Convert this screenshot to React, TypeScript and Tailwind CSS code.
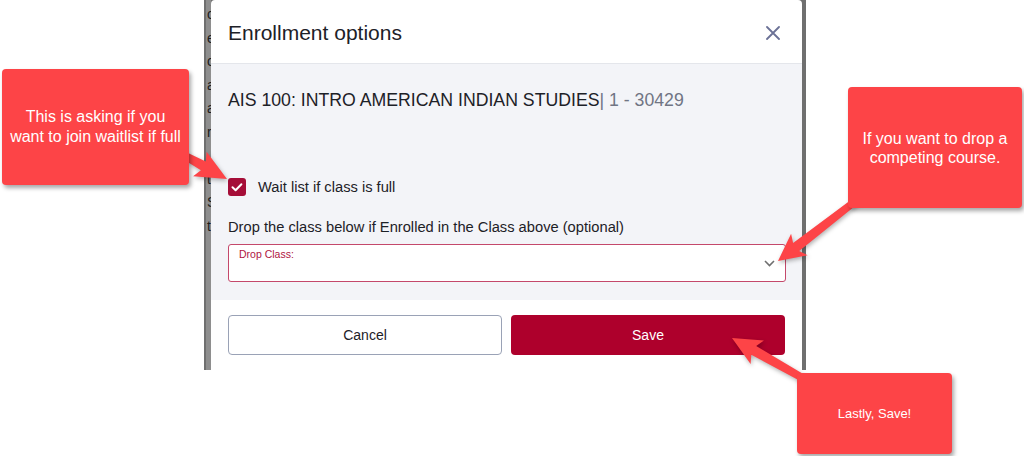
import React from "react";

type Pt = [number, number];

function arrowPoints(tail: Pt, tip: Pt, sw1: number, sw2: number, hl: number, hw: number): string {
  const dx = tip[0] - tail[0];
  const dy = tip[1] - tail[1];
  const L = Math.hypot(dx, dy);
  const ux = dx / L;
  const uy = dy / L;
  const px = -uy;
  const py = ux;
  const bx = tip[0] - ux * hl;
  const by = tip[1] - uy * hl;
  const pts: Pt[] = [
    [tail[0] + (px * sw1) / 2, tail[1] + (py * sw1) / 2],
    [bx + (px * sw2) / 2, by + (py * sw2) / 2],
    [bx - ux * 4 + (px * hw) / 2, by - uy * 4 + (py * hw) / 2],
    tip,
    [bx - ux * 4 - (px * hw) / 2, by - uy * 4 - (py * hw) / 2],
    [bx - (px * sw2) / 2, by - (py * sw2) / 2],
    [tail[0] - (px * sw1) / 2, tail[1] - (py * sw1) / 2],
  ];
  return pts.map((p) => `${p[0].toFixed(1)},${p[1].toFixed(1)}`).join(" ");
}

const RED = "#fd4447";

export default function App() {
  const letters = ["c", "e", "o", "a", "a", "r", "", "t", "S", "t", "", "", "", "", ""];
  return (
    <div className="relative w-[1024px] h-[456px] bg-white overflow-hidden font-['Liberation_Sans',Arial,sans-serif]">
      <div className="flex pl-[204px]">
        <div className="flex h-[370px] w-[602px] bg-[#6f6f6f]">
          <div className="w-[2px] shrink-0" />
          <div className="w-[5px] shrink-0 overflow-hidden bg-[#8e8e8e] pt-[3px] text-[14px] leading-[23.5px] text-[#1c1c1c]">
            {letters.map((l, i) => (
              <div key={i} className="h-[23.5px] pl-[1px]">
                {l}
              </div>
            ))}
          </div>
          <div className="flex w-[591px] shrink-0 flex-col rounded-t-[4px] bg-white">
            {/* header */}
            <div className="flex h-[64px] items-center justify-between border-b border-[#e4e6eb] pl-[17px] pr-[22px] pt-[3px]">
              <span className="text-[21px] leading-[24px] text-[#1d2127]">Enrollment options</span>
              <svg width="14" height="14" viewBox="0 0 14 14">
                <path d="M1 1 L13 13 M13 1 L1 13" stroke="#6b7196" strokeWidth="1.8" strokeLinecap="round" />
              </svg>
            </div>
            {/* body */}
            <div className="flex h-[236px] flex-col bg-[#f3f4f8] px-[17px] pt-[26px]">
              <div className="text-[17.7px] leading-[20px] text-[#1d2127]">
                AIS 100: INTRO AMERICAN INDIAN STUDIES
                <span className="text-[#707584]">| 1 - 30429</span>
              </div>
              <div className="mt-[68px] flex items-center gap-[12px]">
                <div className="flex h-[18px] w-[18px] items-center justify-center rounded-[3px] bg-[#a50d38]">
                  <svg width="18" height="18" viewBox="0 0 18 18">
                    <path d="M4.5 9.3 L7.6 12.2 L13.4 6.2" fill="none" stroke="white" strokeWidth="2" strokeLinecap="round" strokeLinejoin="round" />
                  </svg>
                </div>
                <span className="text-[14.7px] leading-[18px] text-[#1d2127]">Wait list if class is full</span>
              </div>
              <div className="mt-[21px] text-[14.7px] leading-[20px] text-[#1d2127]">
                Drop the class below if Enrolled in the Class above (optional)
              </div>
              <div className="mt-[7px] flex h-[38px] w-[558px] justify-between rounded-[3px] border border-[#c4486b] bg-white pl-[10px] pr-[10px]">
                <span className="pt-[3px] text-[10.5px] leading-[12px] text-[#b0153f]">Drop Class:</span>
                <svg className="mt-[15px]" width="11" height="7" viewBox="0 0 11 7">
                  <path d="M1 1 L5.5 5.5 L10 1" fill="none" stroke="#6f6f6f" strokeWidth="1.6" />
                </svg>
              </div>
            </div>
            {/* footer */}
            <div className="flex gap-[9px] px-[17px] pt-[15px]">
              <div className="flex h-[40px] w-[274px] items-center justify-center rounded-[4px] border border-[#9aa2b6] bg-white text-[14px] text-[#1d2127]">
                Cancel
              </div>
              <div className="flex h-[40px] flex-1 items-center justify-center rounded-[4px] bg-[#ae002c] text-[14px] text-white">
                Save
              </div>
            </div>
          </div>
          <div className="w-[4px] shrink-0" />
        </div>
      </div>

      {/* arrows */}
      <svg
        className="pointer-events-none absolute left-0 top-0 drop-shadow-[1px_2px_2px_rgba(0,0,0,0.3)]"
        width="1024"
        height="456"
        viewBox="0 0 1024 456"
      >
        <polygon points={arrowPoints([178, 152], [227, 179], 7, 10, 27, 28)} fill={RED} />
        <polygon points={arrowPoints([862, 196], [778, 261], 7, 10, 23, 27)} fill={RED} />
        <polygon points={arrowPoints([815, 385], [732, 338], 7, 10, 25, 27)} fill={RED} />
      </svg>

      {/* callouts */}
      <div className="absolute left-[2px] top-[69px] flex h-[116px] w-[187px] items-center justify-center rounded-[4px] bg-[#fd4447] text-center text-[16px] leading-[20px] text-white shadow-[2px_3px_4px_rgba(0,0,0,0.35)]">
        This is asking if you
        <br />
        want to join waitlist if full
      </div>
      <div className="absolute left-[848px] top-[87px] flex h-[121px] w-[174px] items-center justify-center rounded-[4px] bg-[#fd4447] text-center text-[16px] leading-[19px] text-white shadow-[2px_3px_4px_rgba(0,0,0,0.35)]">
        If you want to drop a
        <br />
        competing course.
      </div>
      <div className="absolute left-[797px] top-[373px] flex h-[81px] w-[155px] items-center justify-center rounded-[4px] bg-[#fd4447] text-center text-[13px] leading-[16px] text-white shadow-[2px_3px_4px_rgba(0,0,0,0.35)]">
        Lastly, Save!
      </div>
    </div>
  );
}
